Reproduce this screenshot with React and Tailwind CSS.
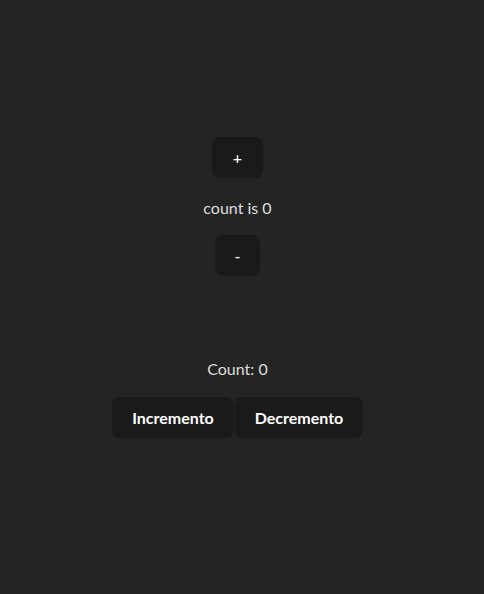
export default function App() {
  return (
    <div
      className="min-h-[594px] w-full bg-[#242424] text-[#dedede] pt-[137px] pr-[9px] flex flex-col items-center text-[16px]"
      style={{ fontFamily: 'Lato, "Open Sans", sans-serif' }}
    >
      <button className="h-[41px] w-[51px] rounded-lg bg-[#1a1a1a] text-white font-medium leading-none">+</button>
      <p className="mt-[17px] mb-[15px] h-[25px] leading-[25px]">count is 0</p>
      <button className="h-[41px] w-[45px] rounded-lg bg-[#1a1a1a] text-white font-medium leading-none">-</button>

      <p className="mt-[80px] h-[25px] leading-[25px]">Count: 0</p>
      <div className="mt-[16px] flex gap-px">
        <button className="h-[41px] w-[122px] rounded-lg bg-[#1a1a1a] text-white font-bold leading-none">Incremento</button>
        <button className="h-[41px] w-[128px] rounded-lg bg-[#1a1a1a] text-white font-bold leading-none">Decremento</button>
      </div>
    </div>
  );
}
